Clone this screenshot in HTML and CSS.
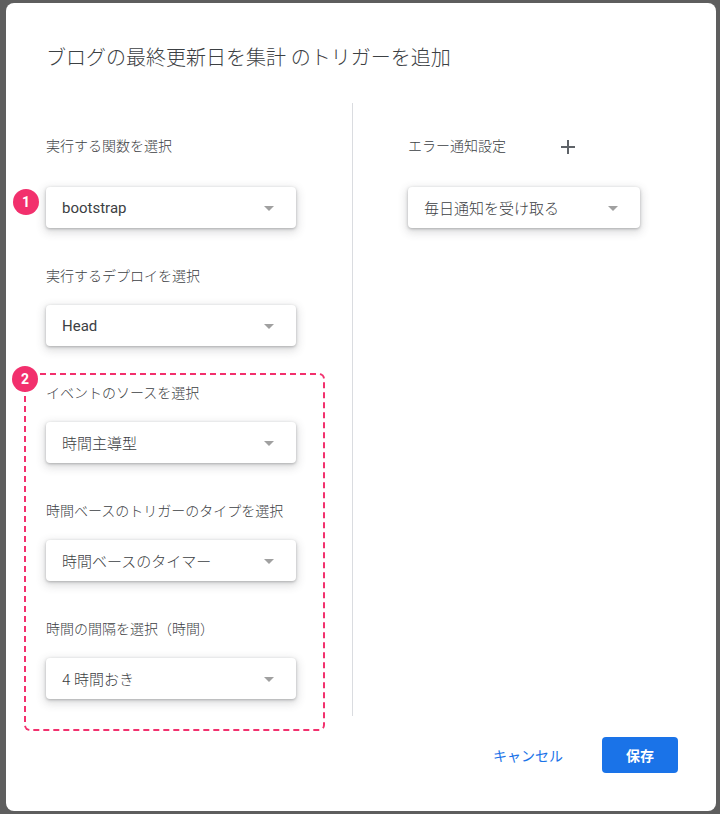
FILE: index.html
```html
<!DOCTYPE html>
<html lang="ja">
<head>
<meta charset="utf-8">
<title>トリガーを追加</title>
<link rel="stylesheet" href="styles.css">
</head>
<body>
<div class="dialog">
  <h1 class="title">ブログの最終更新日を集計 のトリガーを追加</h1>
  <div class="body">
    <div class="col-left">
      <div class="field first">
        <div class="label">実行する関数を選択</div>
        <div class="select-wrap">
          <span class="badge badge-1">1</span>
          <div class="select"><span>bootstrap</span><i class="arrow"></i></div>
        </div>
      </div>
      <div class="field">
        <div class="label">実行するデプロイを選択</div>
        <div class="select"><span>Head</span><i class="arrow"></i></div>
      </div>
      <div class="highlight">
        <span class="badge badge-2">2</span>
        <div class="field">
          <div class="label">イベントのソースを選択</div>
          <div class="select"><span class="ja">時間主導型</span><i class="arrow"></i></div>
        </div>
        <div class="field">
          <div class="label">時間ベースのトリガーのタイプを選択</div>
          <div class="select"><span class="ja">時間ベースのタイマー</span><i class="arrow"></i></div>
        </div>
        <div class="field">
          <div class="label">時間の間隔を選択（時間）</div>
          <div class="select"><span class="ja">4 時間おき</span><i class="arrow"></i></div>
        </div>
      </div>
    </div>
    <div class="divider"></div>
    <div class="col-right">
      <div class="field first">
        <div class="label label-row">エラー通知設定
          <svg class="plus" width="14" height="14" viewBox="0 0 14 14"><path d="M7 0v14M0 7h14" stroke="#5f6368" stroke-width="2" fill="none"/></svg>
        </div>
        <div class="select select-wide"><span class="ja">毎日通知を受け取る</span><i class="arrow"></i></div>
      </div>
    </div>
  </div>
  <div class="footer">
    <button class="btn-text">キャンセル</button>
    <button class="btn-primary">保存</button>
  </div>
</div>
</body>
</html>
```

FILE: styles.css
```css
* { box-sizing: border-box; }

html, body {
  margin: 0;
  padding: 0;
  background: #5e5e5e;
  font-family: Roboto, "Noto Sans CJK JP", "Noto Sans", sans-serif;
  color: #3c4043;
}

.dialog {
  margin: 3px 4px 3px 6px;
  width: 710px;
  height: 808px;
  background: #fff;
  border-radius: 8px;
  padding: 41px 38px 0 40px;
}

.title {
  margin: 0;
  font-size: 20px;
  line-height: 28px;
  font-weight: 300;
  color: #3c4043;
}

.body {
  display: grid;
  grid-template-columns: 306px 1px 1fr;
  align-items: start;
  margin-top: 31px;
}

.col-left {
  padding-top: 33px;
}

.divider {
  height: 613px;
  background: #dadce0;
}

.col-right {
  padding-top: 33px;
  padding-left: 55px;
}

.field + .field {
  margin-top: 38px;
}

.field + .highlight {
  margin-top: 27px;
}

.label {
  font-size: 14px;
  line-height: 20px;
  font-weight: 300;
  color: #3c4043;
  margin-bottom: 19px;
}

.field.first .label {
  margin-bottom: 31px;
}

.label-row {
  display: flex;
  align-items: center;
}

.plus {
  margin-left: 55px;
  margin-top: 2px;
}

.select-wrap {
  position: relative;
}

.select {
  width: 250px;
  height: 41px;
  border-radius: 4px;
  background: #fff;
  box-shadow: 0 1px 3px rgba(60, 64, 67, 0.35), 0 3px 9px 2px rgba(60, 64, 67, 0.16);
  display: flex;
  align-items: center;
  justify-content: space-between;
  padding: 0 22px 0 16px;
  font-size: 15px;
  color: #3c4043;
}

.select .ja {
  font-weight: 300;
}

.select-wide {
  width: 232px;
}

.arrow {
  width: 0;
  height: 0;
  border-left: 5px solid transparent;
  border-right: 5px solid transparent;
  border-top: 5px solid #a0a0a0;
  margin-top: 2px;
}

.highlight {
  position: relative;
  margin-left: -22px;
  width: 301px;
  border: 2px dashed #f2306d;
  border-radius: 6px;
  padding: 8px 0 30px 20px;
}

.badge {
  position: absolute;
  width: 26px;
  height: 26px;
  border-radius: 50%;
  background: #f2306d;
  color: #fff;
  font-size: 14px;
  font-weight: 700;
  line-height: 26px;
  text-align: center;
  font-family: Roboto, "Noto Sans", sans-serif;
}

.badge-1 {
  left: -33px;
  top: 2px;
}

.badge-2 {
  left: -14px;
  top: -9px;
}

.footer {
  display: flex;
  justify-content: flex-end;
  align-items: center;
  margin-top: 6px;
}

.btn-text {
  border: 0;
  background: transparent;
  color: #1a73e8;
  font-family: inherit;
  font-size: 14px;
  padding: 0;
  margin-right: 39px;
  height: 36px;
}

.btn-primary {
  border: 0;
  background: #1a73e8;
  color: #fff;
  font-family: inherit;
  font-size: 14px;
  font-weight: 700;
  width: 76px;
  height: 36px;
  border-radius: 4px;
}
```
